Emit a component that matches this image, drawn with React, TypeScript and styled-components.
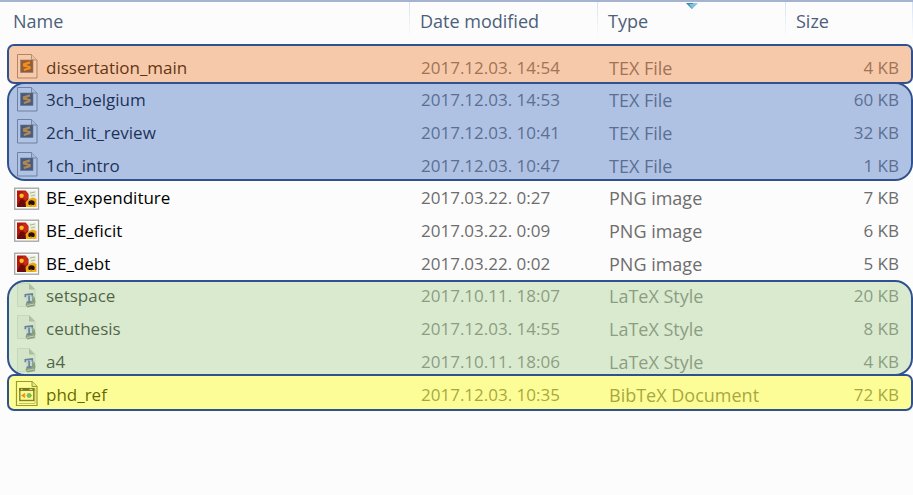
import React from "react";
import styled, { createGlobalStyle, css } from "styled-components";

const GlobalStyle = createGlobalStyle`
  *, *::before, *::after { box-sizing: border-box; }
  html, body { min-height: 100%; }
  body {
    margin: 0;
    background: #fcfcfc;
    color: #000;
    font-family: "Open Sans", "Noto Sans", sans-serif;
    font-size: 17px;
    line-height: 24px;
  }
`;

const columns = css`
  display: grid;
  grid-template-columns: minmax(0, 1fr) 188px 188px 127px;
`;

const FileTable = styled.table`
  display: block;
  width: 100%;
  border-top: 2px solid #a5b3d0;
`;

const Head = styled.thead`
  display: block;
  height: 49px;
`;

const HeadRow = styled.tr`
  ${columns}
`;

const HeadCell = styled.th`
  display: block;
  position: relative;
  padding: 0;
  height: 36px;
  border-right: 1px solid;
  border-image: linear-gradient(#d3e2f5, #fcfcfc) 1;
  font-weight: 400;
`;

const HeadButton = styled.button<{ $first?: boolean }>`
  display: block;
  width: 100%;
  height: 38px;
  padding: 0 0 0 ${(p) => (p.$first ? 13 : 10)}px;
  border: 0;
  background: none;
  color: #4c607a;
  font: inherit;
  font-size: 18px;
  text-align: left;
  cursor: pointer;
`;

const SortMark = styled.svg`
  position: absolute;
  top: 0;
  left: 50%;
  transform: translateX(-50%);
`;

type Tone = "main" | "chapters" | "plain" | "styles" | "refs";

const tones: Record<Tone, { fill: string; radius: number; top: number; bottom: number } | null> = {
  main: { fill: "rgba(237, 125, 49, 0.4)", radius: 7, top: -7, bottom: 0 },
  chapters: { fill: "rgba(68, 114, 196, 0.42)", radius: 18, top: -2, bottom: 1 },
  plain: null,
  styles: { fill: "rgba(177, 213, 154, 0.46)", radius: 18, top: 0, bottom: 2 },
  refs: { fill: "rgba(255, 255, 0, 0.4)", radius: 7, top: -4, bottom: 0 },
};

const Group = styled.tbody<{ $tone: Tone; $single: boolean }>`
  display: grid;
  grid-auto-rows: 1fr;
  position: relative;
  height: ${(p) => (p.$single ? 33 : 98)}px;

  ${(p) => {
    const tone = tones[p.$tone];
    return (
      tone &&
      css`
        &::after {
          content: "";
          position: absolute;
          top: ${tone.top}px;
          right: 0;
          bottom: ${tone.bottom}px;
          left: 7px;
          border: 2px solid #2f528f;
          border-radius: ${tone.radius}px;
          background: ${tone.fill};
          background-clip: padding-box;
          pointer-events: none;
        }
      `
    );
  }}
`;

const Row = styled.tr`
  ${columns}
  align-items: center;
`;

const NameCell = styled.td`
  display: flex;
  align-items: center;
  gap: 6px;
  padding: 0 0 0 14px;
`;

const Cell = styled.td`
  display: block;
  padding: 0 0 0 11px;
  color: #6d6d6d;
  white-space: nowrap;
`;

const TypeCell = styled(Cell)`
  font-size: 18px;
`;

const SizeCell = styled(Cell)`
  padding: 0 14px 0 0;
  text-align: right;
`;

const Icon = styled.svg`
  flex: none;
  width: 26px;
  height: 29px;
`;

type Kind = "tex" | "png" | "sty" | "bib";

function FileIcon({ kind }: { kind: Kind }) {
  if (kind === "tex") {
    return (
      <Icon viewBox="0 0 26 29" aria-hidden="true">
        <path d="M3.5 1.5H17.5L23 7V25H3.5Z" fill="#fff" fillOpacity=".35" stroke="#8a8a8a" />
        <path d="M17.5 1.5V7H23" fill="#eee" stroke="#999" />
        <rect x="6.5" y="7" width="12.5" height="12.5" fill="#4a4a4a" stroke="#777" strokeWidth=".6" />
        <path d="M16 9.4L10 11.4V12.6L15.6 14V15.2L9.8 17" fill="none" stroke="#ff9800" strokeWidth="2.2" />
      </Icon>
    );
  }
  if (kind === "png") {
    return (
      <Icon viewBox="0 0 26 29" aria-hidden="true">
        <rect x=".7" y="4.2" width="23.8" height="21" fill="#fff" stroke="#a3a3a3" strokeWidth="1.3" />
        <rect x="3" y="6.5" width="19.5" height="16.5" fill="#e7eedb" />
        <path d="M3 6.5H11.5L14.5 10V15L11 23H3Z" fill="#b5150c" />
        <path d="M4 20L7 15L12 17L14 23H3Z" fill="#6d0b08" />
        <path d="M9 7Q15 7 14 14L11 17L9 12Z" fill="#c92a18" />
        <circle cx="7.6" cy="11.7" r="2.2" fill="#f2c318" />
        <path d="M16 9L21 8M17 12L21 11" stroke="#a9b995" />
        <path d="M12 23L11.5 18L15 15L19 13.5L22.5 15V23Z" fill="#f0a210" />
        <ellipse cx="17.5" cy="19" rx="3.2" ry="2.8" fill="#1f1408" />
        <path d="M12 22.5Q17 19.5 22 22.5" stroke="#f7c12c" fill="none" />
      </Icon>
    );
  }
  if (kind === "sty") {
    return (
      <Icon viewBox="0 0 26 29" aria-hidden="true">
        <path d="M3.5 1.5H15.5L21 7V24.5H3.5Z" fill="#e3e6e1" fillOpacity=".5" stroke="#c4c9c2" strokeWidth=".6" />
        <path d="M15 1.5V7.5H21Z" fill="#a3ada0" />
        <path d="M12.5 20L18.5 14.5L21.5 19L20.5 24L13.5 25.5L11.5 23Z" fill="#687565" />
        <path d="M13 23.5L20 22" stroke="#c8d0c6" />
        <path d="M11.5 13H18V19.5H12.5Z" fill="#d5dce6" />
        <path d="M11.3 15.2V12.8L18.3 12V14.4M14.9 12.6L15.3 20M12.8 20.2L17.6 19.8" stroke="#2937a8" strokeWidth="1.6" fill="none" />
        <path d="M18.5 13.5L20.5 16L20 19.5" stroke="#5d6a65" fill="none" />
      </Icon>
    );
  }
  return (
    <Icon viewBox="0 0 26 29" aria-hidden="true">
      <path d="M2.5 1.5H18L23 6.5V25.5H2.5Z" fill="#fff" fillOpacity=".5" stroke="#55554a" strokeWidth="1.2" />
      <path d="M18 1.5V6.5H23" fill="#ddd" stroke="#55554a" />
      <path d="M21 8V23.5H5" fill="none" stroke="#999" />
      <rect x="5.8" y="9" width="14" height="11.5" fill="#f5f5f5" stroke="#333" strokeWidth="1.4" />
      <path d="M5.2 9.4H20.4" stroke="#202030" strokeWidth="3" />
      <path d="M7 9.4H8.5M15.5 9.4H18.5" stroke="#ddd" />
      <path d="M7.2 15.5L11 13V18Z" fill="#d81e10" />
      <path d="M9.5 14.5H11.5V16.8H9.5Z" fill="#ef7d22" />
      <circle cx="15" cy="15.5" r="2.4" fill="#2a8bc0" />
      <path d="M15.5 13.4L18.2 15.5L15.5 17.7Z" fill="#2f9648" />
    </Icon>
  );
}

type FileEntry = [name: string, modified: string, size: string];

const groups: { tone: Tone; kind: Kind; type: string; files: FileEntry[] }[] = [
  { tone: "main", kind: "tex", type: "TEX File", files: [["dissertation_main", "2017.12.03. 14:54", "4 KB"]] },
  {
    tone: "chapters",
    kind: "tex",
    type: "TEX File",
    files: [
      ["3ch_belgium", "2017.12.03. 14:53", "60 KB"],
      ["2ch_lit_review", "2017.12.03. 10:41", "32 KB"],
      ["1ch_intro", "2017.12.03. 10:47", "1 KB"],
    ],
  },
  {
    tone: "plain",
    kind: "png",
    type: "PNG image",
    files: [
      ["BE_expenditure", "2017.03.22. 0:27", "7 KB"],
      ["BE_deficit", "2017.03.22. 0:09", "6 KB"],
      ["BE_debt", "2017.03.22. 0:02", "5 KB"],
    ],
  },
  {
    tone: "styles",
    kind: "sty",
    type: "LaTeX Style",
    files: [
      ["setspace", "2017.10.11. 18:07", "20 KB"],
      ["ceuthesis", "2017.12.03. 14:55", "8 KB"],
      ["a4", "2017.10.11. 18:06", "4 KB"],
    ],
  },
  { tone: "refs", kind: "bib", type: "BibTeX Document", files: [["phd_ref", "2017.12.03. 10:35", "72 KB"]] },
];

const headings = ["Name", "Date modified", "Type", "Size"];

export default function App() {
  return (
    <>
      <GlobalStyle />
      <FileTable>
        <Head>
          <HeadRow>
            {headings.map((label, i) => (
              <HeadCell key={label} scope="col" aria-sort={label === "Type" ? "descending" : undefined}>
                <HeadButton type="button" $first={i === 0}>
                  {label}
                </HeadButton>
                {label === "Type" && (
                  <SortMark width="12" height="7" viewBox="0 0 12 7" aria-hidden="true">
                    <path d="M0 1H12L6 7Z" fill="#8fcde6" />
                    <path d="M0 1H7L6 7Z" fill="#3f88a8" />
                    <path d="M3 2H11L6 6.5Z" fill="#7cc3e0" />
                  </SortMark>
                )}
              </HeadCell>
            ))}
          </HeadRow>
        </Head>
        {groups.map((group) => (
          <Group key={group.tone} $tone={group.tone} $single={group.files.length === 1}>
            {group.files.map(([name, modified, size]) => (
              <Row key={name}>
                <NameCell>
                  <FileIcon kind={group.kind} />
                  {name}
                </NameCell>
                <Cell>{modified}</Cell>
                <TypeCell>{group.type}</TypeCell>
                <SizeCell>{size}</SizeCell>
              </Row>
            ))}
          </Group>
        ))}
      </FileTable>
    </>
  );
}
